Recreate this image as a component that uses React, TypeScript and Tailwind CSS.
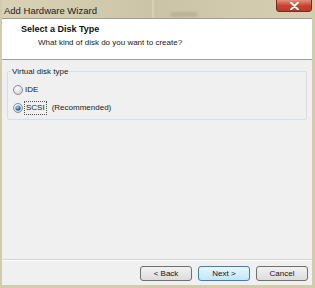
import React from "react";

const font = { fontFamily: '"Liberation Sans", Arial, sans-serif' };

function Radio({ checked }: { checked?: boolean }) {
  return (
    <svg width="10" height="10" viewBox="0 0 10 10" className="shrink-0">
      <defs>
        <radialGradient id={checked ? "rg1" : "rg0"} cx="40%" cy="35%" r="70%">
          <stop offset="0%" stopColor="#ffffff" />
          <stop offset="100%" stopColor="#cfcfcf" />
        </radialGradient>
        <radialGradient id="dot" cx="40%" cy="35%" r="70%">
          <stop offset="0%" stopColor="#9fe0ff" />
          <stop offset="60%" stopColor="#2a7fc4" />
          <stop offset="100%" stopColor="#0b3f73" />
        </radialGradient>
      </defs>
      <circle cx="5" cy="5" r="4.5" fill={`url(#${checked ? "rg1" : "rg0"})`} stroke="#8e8f8f" strokeWidth="1" />
      {checked && <circle cx="5" cy="5" r="2.6" fill="url(#dot)" />}
    </svg>
  );
}

export default function App() {
  return (
    <div className="w-[315px] h-[288px] flex flex-col bg-[#d2cbae] pl-[2px] pr-[3px] pb-[3px] overflow-hidden" style={font}>
      <div className="h-[18px] relative flex items-center pl-[2px] bg-gradient-to-r from-[#d9d2b6] via-[#cbc4a6] to-[#d6cfb3]">
        <span className="text-[9.5px] text-[#1c1c1c] leading-none mt-[3px]">Add Hardware Wizard</span>
        <div className="absolute left-[150px] top-0 w-[2px] h-[18px] bg-[#dcd6bd] opacity-70" />
        <div className="absolute left-[168px] top-[12px] w-[28px] h-[5px] rounded-full bg-[#a9a28a] opacity-50 blur-[1px]" />
        <div className="absolute right-[0px] -top-[1px] w-[36px] h-[13px] rounded-b-[3px] border border-[#7a2a20] bg-gradient-to-b from-[#e0907f] via-[#c8452f] to-[#b83a26] flex items-center justify-center">
          <svg width="9" height="8" viewBox="0 0 9 8">
            <path d="M1 0.5 L8 7.5 M8 0.5 L1 7.5" stroke="#ffffff" strokeWidth="2" strokeLinecap="round" />
          </svg>
        </div>
      </div>
      <div className="flex-1 flex flex-col bg-[#f0f0f0] border-t border-[#a59f88]">
        <div className="h-[41px] bg-white border-b border-[#a0a0a0] flex flex-col pl-[19px] pt-[4px]">
          <span className="text-[9px] font-bold text-[#111] leading-[12px]">Select a Disk Type</span>
          <span className="text-[8px] text-[#1a1a1a] leading-[12px] pl-[17px] mt-[2px]">What kind of disk do you want to create?</span>
        </div>
        <div className="mx-[5px] mt-[11px] h-[49px] border border-[#d5dfe5] rounded-[2px] relative px-[5px] pt-[10px]">
          <span className="absolute -top-[6px] left-[3px] bg-[#f0f0f0] px-[1px] text-[8px] leading-[11px] text-[#1a1a1a]">Virtual disk type</span>
          <div className="flex items-center gap-[2px] h-[12px] mt-[2px]">
            <Radio />
            <span className="text-[8px] text-[#1a1a1a]">IDE</span>
          </div>
          <div className="flex items-center gap-[1px] h-[14px] mt-[5px]">
            <Radio checked />
            <span className="text-[8px] text-[#1a1a1a] px-[1px] border border-dotted border-[#555] leading-[12px]">SCSI</span>
            <span className="text-[8px] text-[#1a1a1a] ml-[4px]">(Recommended)</span>
          </div>
        </div>
        <div className="flex-1" />
        <div className="h-[2px] border-t border-[#d5d5d5] border-b border-b-white" />
        <div className="h-[24px] flex items-start justify-end gap-[6px] pr-[4px] pt-[5px]">
          <button className="w-[52px] h-[15px] rounded-[3px] border border-[#707070] bg-gradient-to-b from-[#f2f2f2] to-[#dcdcdc] text-[8px] text-[#111] leading-none">&lt; Back</button>
          <button className="w-[52px] h-[15px] rounded-[3px] border border-[#3c7fb1] bg-gradient-to-b from-[#eaf6fd] to-[#bee6fd] text-[8px] text-[#111] leading-none">Next &gt;</button>
          <button className="w-[52px] h-[15px] rounded-[3px] border border-[#707070] bg-gradient-to-b from-[#f2f2f2] to-[#dcdcdc] text-[8px] text-[#111] leading-none">Cancel</button>
        </div>
      </div>
    </div>
  );
}
